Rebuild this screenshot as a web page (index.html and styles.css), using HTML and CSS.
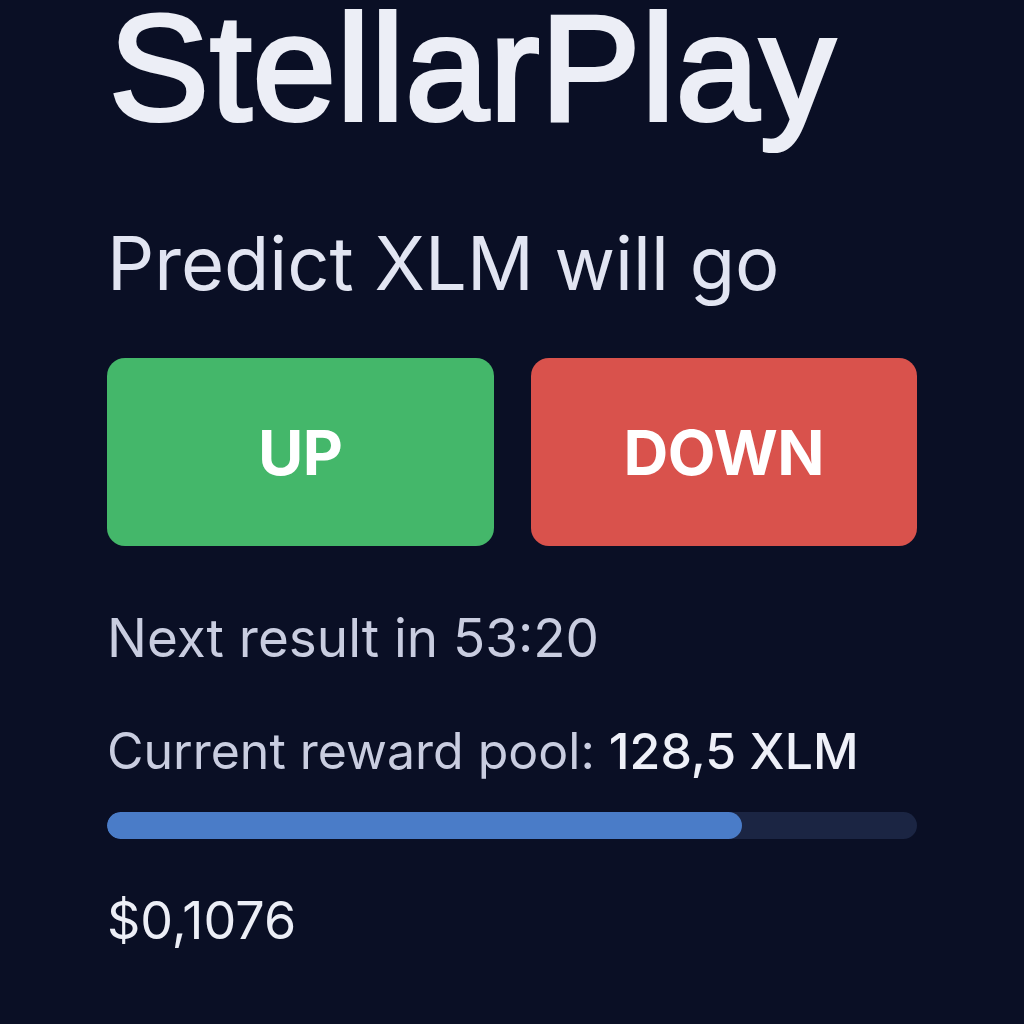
FILE: index.html
```html
<!DOCTYPE html>
<html>
<head>
<meta charset="utf-8">
<link rel="stylesheet" href="styles.css">
</head>
<body>
<main class="app">
  <h1 class="title">StellarPlay</h1>
  <h2 class="prompt">Predict XLM will go</h2>
  <div class="buttons">
    <button class="btn up">UP</button>
    <button class="btn down">DOWN</button>
  </div>
  <p class="timer">Next result in 53:20</p>
  <p class="pool">Current reward pool: <strong>128,5 XLM</strong></p>
  <div class="bar"><div class="fill" style="width:78.4%"></div></div>
  <p class="price">$0,1076</p>
</main>
</body>
</html>
```
FILE: styles.css
```css
html, body {
  margin: 0;
  padding: 0;
  background: #0a0f25;
  height: 100%;
}
body {
  font-family: Inter, "Noto Sans", sans-serif;
  color: #e8eaf4;
}
.app {
  padding: 0 107px;
}
.title {
  margin: 0;
  font-family: "Liberation Sans", Arial, sans-serif;
  font-size: 150px;
  font-weight: 400;
  -webkit-text-stroke: 4px #eceef6;
  line-height: 136px;
  letter-spacing: 0.9px;
  padding-left: 2px;
  color: #eceef6;
}
.prompt {
  margin: 82px 0 0;
  font-size: 74px;
  font-weight: 400;
  line-height: 90px;
  color: #e2e5f2;
}
.buttons {
  display: grid;
  grid-template-columns: 1fr 1fr;
  gap: 37px;
  margin-top: 50px;
}
.btn {
  height: 188px;
  border: none;
  border-radius: 18px;
  font-family: Inter, "Noto Sans", sans-serif;
  font-size: 62px;
  font-weight: 700;
  letter-spacing: -0.5px;
  color: #ffffff;
}
.up { background: #44b76a; }
.down { background: #d9524c; }
.timer {
  margin: 57px 0 0;
  font-size: 53px;
  line-height: 70px;
  color: #c9cde0;
}
.pool {
  margin: 43px 0 0;
  font-size: 50px;
  line-height: 70px;
  color: #c9cde0;
}
.pool strong {
  font-weight: 500;
  color: #eef0f8;
}
.bar {
  margin-top: 26px;
  height: 27px;
  border-radius: 14px;
  background: #1b2543;
  overflow: hidden;
}
.fill {
  height: 100%;
  border-radius: 14px;
  background: #4a7cc8;
}
.price {
  margin: 47px 0 0;
  font-size: 52px;
  line-height: 70px;
  color: #eceef6;
}
```
